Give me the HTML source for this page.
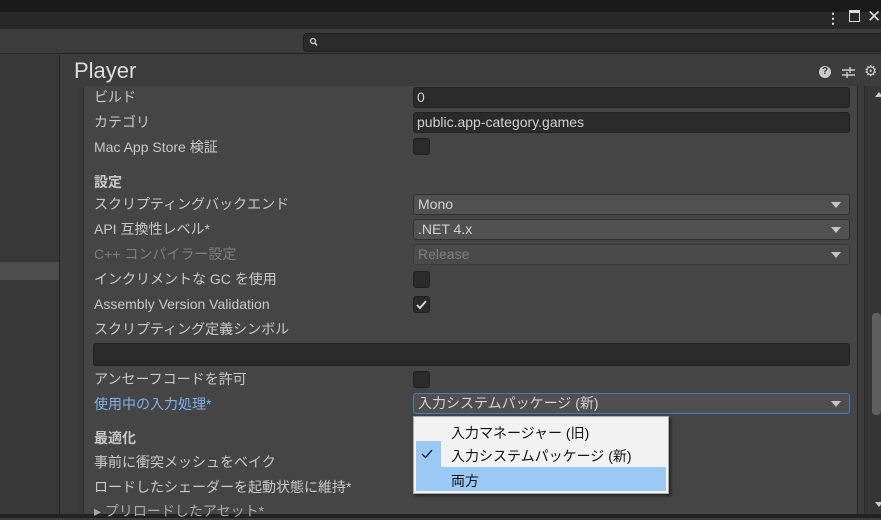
<!DOCTYPE html>
<html><head><meta charset="utf-8"><style>
*{box-sizing:border-box;margin:0;padding:0}
body{width:881px;height:518px;overflow:hidden;background:#3c3c3c;font-family:"Liberation Sans","Noto Sans CJK JP",sans-serif;font-size:14px;color:#c8c8c8;position:relative}
.a{position:absolute}
.lbl{position:absolute;left:94px;white-space:nowrap;line-height:18px;font-size:14px}
.fld{position:absolute;left:413px;width:437px;height:21px;background:#2a2a2a;border:1px solid #212121;border-radius:3px;color:#d2d2d2;padding-left:3px;line-height:19px;font-size:14px}
.dd{position:absolute;left:413px;width:437px;height:21px;background:#515151;border:1px solid #303030;border-radius:3px;color:#d2d2d2;padding-left:4px;line-height:19px;font-size:14px}
.dd:after{content:"";position:absolute;right:8px;top:7px;border-left:5px solid transparent;border-right:5px solid transparent;border-top:6px solid #c4c4c4}
.cb{position:absolute;left:413px;width:17px;height:17px;background:#2a2a2a;border:1px solid #202020;border-radius:3px}
</style></head><body>
<div class="a" style="left:0;top:0;width:881px;height:12px;background:#191919"></div>
<div class="a" style="left:0;top:12px;width:881px;height:17px;background:#282828"></div>
<div class="a" style="left:826px;top:10px;color:#ddd;font-size:14px;font-weight:bold">⋮</div>
<div class="a" style="left:849px;top:10px;width:11px;height:12px;border:1.5px solid #ddd;border-top-width:3px"></div>
<div class="a" style="left:867px;top:7px;color:#ddd;font-size:17px">✕</div>
<div class="a" style="left:0;top:29px;width:881px;height:25px;background:#3c3c3c;border-bottom:1px solid #242424"></div>
<div class="a" style="left:303px;top:33px;width:580px;height:19px;background:#2a2a2a;border:1px solid #1e1e1e;border-radius:4px"></div>
<svg class="a" style="left:309px;top:37px" width="10" height="10" viewBox="0 0 10 10"><circle cx="4" cy="4" r="2.5" fill="none" stroke="#ccc" stroke-width="1.3"/><path d="M5.5 5.5L8 8.5" stroke="#ccc" stroke-width="1.5"/></svg>
<div class="a" style="left:0;top:55px;width:60px;height:463px;background:#383838;border-right:1px solid #232323"></div>
<div class="a" style="left:0;top:262px;width:59px;height:18px;background:#4d4d4d"></div>
<div class="a" style="left:74px;top:58px;font-size:22px;color:#dedede">Player</div>
<div class="a" style="left:819px;top:66px;width:12px;height:12px;border-radius:50%;background:#ccc;color:#333;font-size:10px;font-weight:bold;text-align:center;line-height:12px">?</div>
<svg class="a" style="left:842px;top:66px" width="13" height="13" viewBox="0 0 13 13"><path d="M0 4H13M0 9H13M8 1V7M5 6V12" stroke="#ccc" stroke-width="1.4"/></svg>
<div class="a" style="left:864px;top:62px;color:#ccc;font-size:15px">⚙</div>
<div class="a" style="left:78px;top:86px;width:6px;height:432px;background:#3a3a3a;border-right:1px solid #2e2e2e"></div>
<div class="a" style="left:84px;top:86px;width:774px;height:432px;background:#454545;border-right:1px solid #2c2c2c"></div>
<div class="a" style="left:864px;top:86px;width:17px;height:432px;background:#363636;border-left:1px solid #2a2a2a"></div>
<div class="a" style="left:872px;top:313px;width:9px;height:102px;background:#5e5e5e;border-radius:4px"></div>
<div class="a" style="left:875px;top:92px;border-left:4px solid transparent;border-right:4px solid transparent;border-bottom:5px solid #ccc"></div>
<div class="a" style="left:875px;top:502px;border-left:4px solid transparent;border-right:4px solid transparent;border-top:5px solid #ccc"></div>
<div class="a" style="left:0;top:514px;width:881px;height:4px;background:#222"></div>

<div class="lbl" style="top:88px">ビルド</div><div class="fld" style="top:87px">0</div>
<div class="lbl" style="top:113px">カテゴリ</div><div class="fld" style="top:112px">public.app-category.games</div>
<div class="lbl" style="top:138px">Mac App Store 検証</div><div class="cb" style="top:138px"></div>
<div class="lbl" style="top:173px;font-weight:bold">設定</div>
<div class="lbl" style="top:195px">スクリプティングバックエンド</div><div class="dd" style="top:194px">Mono</div>
<div class="lbl" style="top:220px">API 互換性レベル*</div><div class="dd" style="top:219px">.NET 4.x</div>
<div class="lbl" style="top:245px;color:#7e7e7e">C++ コンパイラー設定</div><div class="dd" style="top:244px;color:#7e7e7e;background:#4a4a4a;border-color:#3a3a3a">Release</div>
<div class="lbl" style="top:270px">インクリメントな GC を使用</div><div class="cb" style="top:271px"></div>
<div class="lbl" style="top:295px">Assembly Version Validation</div><div class="cb" style="top:296px"><svg width="15" height="15" viewBox="0 0 15 15" style="position:absolute;left:0;top:0"><path d="M3 8L6 11L12 4" fill="none" stroke="#ddd" stroke-width="1.8"/></svg></div>
<div class="lbl" style="top:320px">スクリプティング定義シンボル</div>
<div class="fld" style="top:343px;left:93px;width:757px;height:23px"></div>
<div class="lbl" style="top:370px">アンセーフコードを許可</div><div class="cb" style="top:371px"></div>
<div class="lbl" style="top:395px;color:#7fb0f0">使用中の入力処理*</div><div class="dd" style="top:393px;border-color:#3f7fc8;background:#4f4f4f">入力システムパッケージ (新)</div>
<div class="lbl" style="top:429px;font-weight:bold">最適化</div>
<div class="lbl" style="top:453px">事前に衝突メッシュをベイク</div>
<div class="lbl" style="top:478px">ロードしたシェーダーを起動状態に維持*</div>
<div class="lbl" style="top:502px;color:#aaa">▸ プリロードしたアセット*</div>

<div class="a" style="left:413px;top:416px;width:256px;height:78px;background:#f2f2f2;border:1px solid #aaa;box-shadow:2px 2px 3px rgba(0,0,0,.5);color:#111;font-size:14px">
<div class="a" style="left:2px;top:24px;width:25px;height:26px;background:#99c9f4"></div>
<div class="a" style="left:2px;top:50px;width:250px;height:24px;background:#99c9f4"></div>
<div class="a" style="left:37px;top:6px">入力マネージャー (旧)</div>
<svg class="a" style="left:6px;top:30px" width="14" height="14" viewBox="0 0 14 14"><path d="M2 7L5.5 10.5L12 3" fill="none" stroke="#222" stroke-width="1.4"/></svg>
<div class="a" style="left:37px;top:29px">入力システムパッケージ (新)</div>
<div class="a" style="left:37px;top:54px">両方</div>
</div>
</body></html>
